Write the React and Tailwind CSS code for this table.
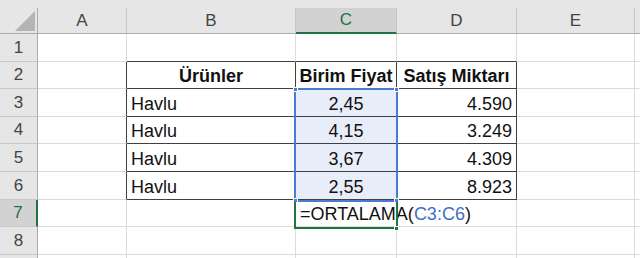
import React from "react";

const COLS = ["A", "B", "C", "D", "E", "F"];
const colWidths = "grid-cols-[38px_89px_169px_101px_120px_118px_1fr]";

const Formula = () => (
  <span>
    =ORTALAMA(<span className="text-[#3f6fc6]">C3:C6</span>)
  </span>
);

// row number, height (incl. bottom gridline), cell values by column
const rows = [
  { n: 1, h: "h-[28px]", cells: {} },
  { n: 2, h: "h-[27px]", cells: { B: "Ürünler", C: "Birim Fiyat", D: "Satış Miktarı" } },
  { n: 3, h: "h-[28px]", cells: { B: "Havlu", C: "2,45", D: "4.590" } },
  { n: 4, h: "h-[27px]", cells: { B: "Havlu", C: "4,15", D: "3.249" } },
  { n: 5, h: "h-[28px]", cells: { B: "Havlu", C: "3,67", D: "4.309" } },
  { n: 6, h: "h-[28px]", cells: { B: "Havlu", C: "2,55", D: "8.923" } },
  { n: 7, h: "h-[27px]", cells: { C: <Formula /> } },
  { n: 8, h: "h-[28px]", cells: {} },
  { n: 9, h: "h-[28px]", cells: {}, hideLabel: true },
];

const inTable = (r, c) => r >= 2 && r <= 6 && ["B", "C", "D"].includes(c);

const cellClass = (r, c) => {
  const darkRight = r >= 2 && r <= 6 && ["A", "B", "C", "D"].includes(c);
  const darkBottom = r >= 1 && r <= 6 && ["B", "C", "D"].includes(c);
  const picked = c === "C" && r >= 3 && r <= 6;
  return [
    "flex items-end pb-[2px] px-[4px] border-r border-b whitespace-nowrap overflow-visible leading-[20px] text-[18px] text-[#111]",
    darkRight ? "border-r-[#404040]" : "border-r-[#dcdcdc]",
    darkBottom ? "border-b-[#404040]" : "border-b-[#dcdcdc]",
    picked ? "bg-[#e8eef9]" : "",
    r === 2 && inTable(r, c) ? "justify-center font-bold" : "",
    r > 2 && r < 7 && c === "C" ? "justify-center" : "",
    r > 2 && c === "D" ? "justify-end" : "",
  ].join(" ");
};

const Handle = ({ className }) => (
  <div className={`absolute w-[5px] h-[5px] border border-white ${className}`} />
);

export default function App() {
  return (
    <div className="relative w-[640px] h-[258px] overflow-hidden bg-white font-['Liberation_Sans',Arial,sans-serif]">
      <div className="h-[8px] bg-[#e6e6e6]" />

      <div className={`grid ${colWidths}`}>
        {/* column header strip */}
        <div className="relative h-[26px] bg-[#e6e6e6] border-r border-b border-[#ababab]">
          <svg className="absolute left-[14px] top-[2px]" width="22" height="22" viewBox="0 0 22 22">
            <polygon points="21,1 21,21 1,21" fill="#b4b4b4" />
          </svg>
        </div>
        {COLS.map((c) => (
          <div
            key={c}
            className={`h-[26px] flex items-center justify-center text-[17px] border-b ${
              c === "C"
                ? "bg-[#d2d2d2] text-[#217346] border-b-2 border-b-[#217346]"
                : "bg-[#e6e6e6] text-[#444] border-b-[#ababab]"
            } ${c === "F" ? "" : "border-r border-r-[#c8c8c8]"}`}
          >
            {c === "F" ? "" : c}
          </div>
        ))}

        {rows.map((row) => (
          <React.Fragment key={row.n}>
            <div
              className={`${row.h} flex items-center justify-center text-[17px] border-b border-b-[#c8c8c8] ${
                row.n === 7
                  ? "bg-[#d2d2d2] text-[#217346] border-r-2 border-r-[#217346]"
                  : "bg-[#e6e6e6] text-[#444] border-r border-r-[#ababab]"
              }`}
            >
              {row.hideLabel ? "" : row.n}
            </div>
            {COLS.map((c) => (
              <div key={c} className={`${row.h} ${cellClass(row.n, c)}`}>
                {row.cells[c] || ""}
              </div>
            ))}
          </React.Fragment>
        ))}
      </div>

      {/* referenced range C3:C6 */}
      <div className="absolute left-[294px] top-[88px] w-[104px] h-[114px] border-2 border-[#4a7bd2]" />
      <Handle className="left-[293px] top-[87px] bg-[#4a7bd2]" />
      <Handle className="left-[394px] top-[87px] bg-[#4a7bd2]" />
      <Handle className="left-[293px] top-[198px] bg-[#4a7bd2]" />
      <Handle className="left-[394px] top-[198px] bg-[#4a7bd2]" />

      {/* active cell C7 */}
      <div className="absolute left-[294px] top-[202px] w-[104px] h-[27px] border-2 border-t-0 border-[#217346]" />
      <Handle className="left-[394px] top-[226px] bg-[#217346]" />
    </div>
  );
}
